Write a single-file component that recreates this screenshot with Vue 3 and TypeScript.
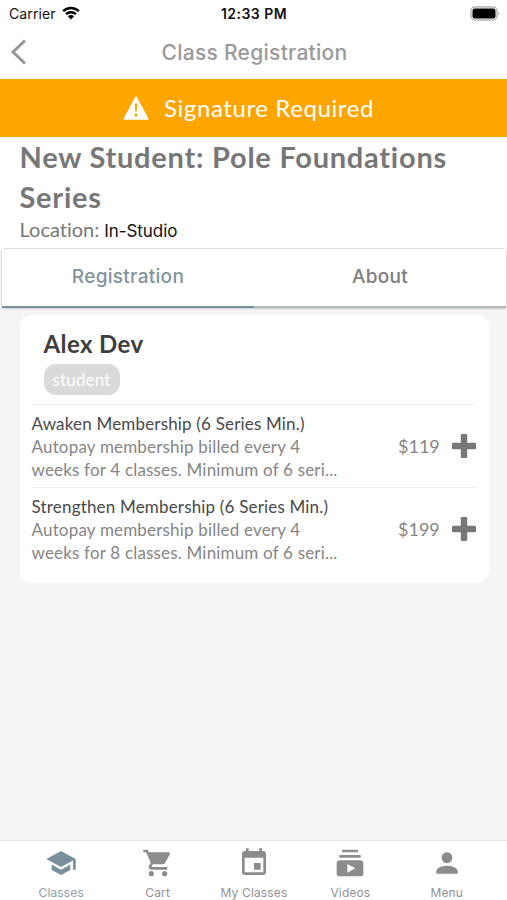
<script setup lang="ts">
interface Plan {
  name: string
  lines: string[]
  price: string
  key: string
}

interface NavItem {
  label: string
  key: string
  icon: string
}

const plans: Plan[] = [
  {
    key: 'awaken',
    name: 'Awaken Membership (6 Series Min.)',
    lines: ['Autopay membership billed every 4', 'weeks for 4 classes. Minimum of 6 seri...'],
    price: '$119',
  },
  {
    key: 'strengthen',
    name: 'Strengthen Membership (6 Series Min.)',
    lines: ['Autopay membership billed every 4', 'weeks for 8 classes. Minimum of 6 seri...'],
    price: '$199',
  },
]

const navItems: NavItem[] = [
  {
    key: 'classes',
    label: 'Classes',
    icon: 'M5 13.18v4L12 21l7-3.82v-4L12 17l-7-3.82zM12 3L1 9l11 6 9-4.91V17h2V9L12 3z',
  },
  {
    key: 'cart',
    label: 'Cart',
    icon: 'M7 18c-1.1 0-1.99.9-1.99 2S5.9 22 7 22s2-.9 2-2-.9-2-2-2zM1 2v2h2l3.6 7.59-1.35 2.45c-.16.28-.25.61-.25.96 0 1.1.9 2 2 2h12v-2H7.42c-.14 0-.25-.11-.25-.25l.03-.12.9-1.63h7.45c.75 0 1.41-.41 1.75-1.03l3.58-6.49c.08-.14.12-.31.12-.48 0-.55-.45-1-1-1H5.21l-.94-2H1zm16 16c-1.1 0-1.99.9-1.99 2s.89 2 1.99 2 2-.9 2-2-.9-2-2-2z',
  },
  {
    key: 'mine',
    label: 'My Classes',
    icon: 'M17 12h-5v5h5v-5zM16 1v2H8V1H6v2H5c-1.11 0-1.99.9-1.99 2L3 19c0 1.1.89 2 2 2h14c1.1 0 2-.9 2-2V5c0-1.1-.9-2-2-2h-1V1h-2zm3 18H5V8h14v11z',
  },
  {
    key: 'videos',
    label: 'Videos',
    icon: 'M20 8H4V6h16v2zm-2-6H6v2h12V2zm4 10v8c0 1.1-.9 2-2 2H4c-1.1 0-2-.9-2-2v-8c0-1.1.9-2 2-2h16c1.1 0 2 .9 2 2zm-6 4l-6-3.27v6.53L16 16z',
  },
  {
    key: 'menu',
    label: 'Menu',
    icon: 'M12 12c2.21 0 4-1.79 4-4s-1.79-4-4-4-4 1.79-4 4 1.79 4 4 4zm0 2c-2.67 0-8 1.34-8 4v2h16v-2c0-2.66-5.33-4-8-4z',
  },
]
</script>

<template>
  <div class="screen">
    <div class="status">
      <div class="carrier">
        <span class="carrier-name">Carrier</span>
        <svg class="wifi" viewBox="0 0 18 14" width="18" height="14">
          <path d="M1.2 5.2C5.5.9 12.5.9 16.8 5.2M4 8.2c2.8-2.7 7.2-2.7 10 0" fill="none" stroke="#000" stroke-width="2.5" />
          <path d="M5.9 10.3c1.8-1.6 4.4-1.6 6.2 0L9 13.5z" />
        </svg>
      </div>
      <span class="clock">12:33 PM</span>
      <div class="power">
        <svg viewBox="0 0 31 16" width="31" height="16">
          <rect x="1" y="1" width="26" height="13" rx="4" fill="#fff" stroke="#b5b5b5" stroke-width="1.5" />
          <rect x="2.5" y="2.6" width="23" height="9.8" rx="2.2" fill="#000" />
          <path d="M28.5 5.500q2.200 2 0 4z" fill="#aaa" />
        </svg>
      </div>
    </div>

    <header class="topbar">
      <svg class="back" viewBox="0 0 18 28" width="18" height="28">
        <path d="M15 2.5 3 14l12 11.5" fill="none" stroke="#979797" stroke-width="3" />
      </svg>
      <h1>Class Registration</h1>
    </header>

    <div class="banner">
      <svg viewBox="0 0 26 24" width="26" height="24">
        <path d="M13 1.2 24.7 23H1.3z" fill="#fff" stroke="#fff" stroke-width="1.6" stroke-linejoin="round" />
        <path d="M11.8 7.5h2.4l-.4 8h-1.6z" fill="#ffa500" />
        <circle cx="13" cy="18.9" r="1.5" fill="#ffa500" />
      </svg>
      <span class="banner-text">Signature Required</span>
    </div>

    <section class="summary">
      <h2>New Student: Pole Foundations<br />Series</h2>
      <p class="location"><span class="loc-label">Location:</span><span class="loc-value">In-Studio</span></p>
    </section>

    <nav class="tabs">
      <button class="tab active">Registration</button>
      <button class="tab">About</button>
    </nav>

    <main class="body">
      <section class="card">
        <div class="person">
          <h3>Alex Dev</h3>
          <span class="chip">student</span>
        </div>
        <div v-for="plan in plans" :key="plan.key" class="plan">
          <div class="plan-info">
            <div class="plan-name">{{ plan.name }}</div>
            <div v-for="line in plan.lines" :key="line">{{ line }}</div>
          </div>
          <span class="price">{{ plan.price }}</span>
          <svg class="plus" viewBox="0 0 24 24" width="24" height="24">
            <rect x="8.8" y="0" width="6.4" height="24" rx="1.3" />
            <rect x="0" y="8.8" width="24" height="6.4" rx="1.3" />
          </svg>
        </div>
      </section>
    </main>

    <footer class="bottom">
      <div v-for="item in navItems" :key="item.key" class="nav-item" :class="{ current: item.key === 'classes' }">
        <svg viewBox="0 0 24 24" width="32" height="32"><path :d="item.icon" /></svg>
        <span>{{ item.label }}</span>
      </div>
    </footer>
  </div>
</template>

<style>
body {
  margin: 0;
}
</style>

<style scoped>
.screen {
  display: flex;
  flex-direction: column;
  width: 507px;
  height: 900px;
  overflow: hidden;
  background: #fff;
  font-family: Lato, sans-serif;
  font-variant-ligatures: none;
  color: #777;
  white-space: nowrap;
}
h1, h2, h3, p {
  margin: 0;
}
svg {
  display: block;
  flex: none;
}
.status {
  display: grid;
  grid-template-columns: 1fr auto 1fr;
  align-items: center;
  height: 27px;
  padding: 0 6px 0 9px;
  font-family: Inter, sans-serif;
  font-size: 14px;
  line-height: 27px;
  color: #111;
}
.carrier {
  display: flex;
  align-items: center;
  gap: 6px;
  letter-spacing: 0.1px;
}
.wifi {
  margin-top: -2px;
}
.clock {
  margin-right: 2px;
  font-weight: 600;
  letter-spacing: 0.45px;
}
.power {
  display: flex;
  justify-content: flex-end;
}
.topbar {
  display: grid;
  grid-template-columns: 40px 1fr 40px;
  align-items: center;
  height: 52px;
  padding: 0 8px 0 10px;
}
.back {
  margin-top: -2px;
}
h1 {
  text-align: center;
  font-family: Inter, sans-serif;
  font-size: 21px;
  font-weight: 500;
  line-height: 52px;
  letter-spacing: 0.28px;
  color: #999;
}
.banner {
  display: flex;
  align-items: center;
  justify-content: center;
  gap: 15px;
  height: 58.4px;
  padding: 0 10px 0 0;
  box-sizing: border-box;
  background: #ffa500;
  color: #fff;
  font-size: 24px;
  letter-spacing: 0.6px;
}
.banner-text {
  margin-top: -2px;
}
.summary {
  height: 110.6px;
  padding: 0 20px 0 19.5px;
  box-sizing: border-box;
}
h2 {
  font-size: 29px;
  line-height: 40px;
  letter-spacing: 0.75px;
  color: #777;
}
.location {
  display: flex;
  align-items: center;
  gap: 5px;
  height: 24px;
}
.loc-label {
  margin-top: -1px;
  font-size: 20px;
}
.loc-value {
  margin-top: 3px;
  font-family: Inter, sans-serif;
  font-size: 17px;
  letter-spacing: -0.05px;
  color: #111;
}
.tabs {
  position: relative;
  display: flex;
  height: 60px;
  margin-left: 1px;
  box-sizing: border-box;
  border: 1px solid #dedede;
  border-bottom: 0;
  border-radius: 4px;
  box-shadow: 0 1px 2px #ccc;
}
.tab {
  flex: 1;
  padding: 0;
  border: 0;
  border-bottom: 2px solid #b4bbbf;
  background: #fff;
  font-family: Inter, sans-serif;
  font-size: 19px;
  font-weight: 500;
  line-height: 56px;
  letter-spacing: 0.3px;
  color: #7d7d7d;
}
.tab.active {
  border-bottom-color: #78909c;
  color: #7f949b;
}
.body {
  flex: 1;
  padding: 7px 18px 0 20px;
  background: #f5f5f5;
}
.card {
  height: 268px;
  padding: 0 13px 0 11.5px;
  box-sizing: border-box;
  border-radius: 12px;
  background: #fff;
}
.person {
  height: 89px;
  padding: 12px 0 0 12px;
  box-sizing: border-box;
}
h3 {
  font-size: 24px;
  line-height: 34px;
  letter-spacing: 0.4px;
  color: #3d3d3d;
}
.chip {
  display: flex;
  align-items: center;
  justify-content: center;
  width: 76px;
  height: 31px;
  margin-top: 3px;
  border-radius: 12px;
  background: #dadada;
  color: #fff;
  font-size: 17px;
  letter-spacing: 0.15px;
}
.plan {
  display: flex;
  align-items: center;
  height: 83px;
  box-sizing: border-box;
  border-top: 1px solid #f0f0f0;
}
.plan-info {
  flex: 1;
  padding-top: 1px;
  font-size: 17px;
  line-height: 23.3px;
  letter-spacing: 0.18px;
  color: #858585;
}
.plan-name {
  color: #484848;
}
.price {
  width: 41px;
  margin-right: 13px;
  font-size: 18px;
  color: #858585;
}
.plus {
  fill: #777;
}
.bottom {
  display: grid;
  grid-template-columns: repeat(5, 96.4px);
  justify-content: center;
  height: 60px;
  padding-left: 1px;
  box-sizing: border-box;
  border-top: 1px solid #e8e8e8;
  background: #fff;
}
.nav-item {
  display: flex;
  flex-direction: column;
  align-items: center;
  padding-top: 6px;
  font-family: Inter, sans-serif;
  font-size: 12px;
  line-height: 16px;
  letter-spacing: 0.15px;
  color: #929292;
  fill: #8c8c8c;
}
.nav-item > span {
  margin-top: 6px;
}
.current {
  color: #8fa0a7;
  fill: #78909c;
}
</style>
